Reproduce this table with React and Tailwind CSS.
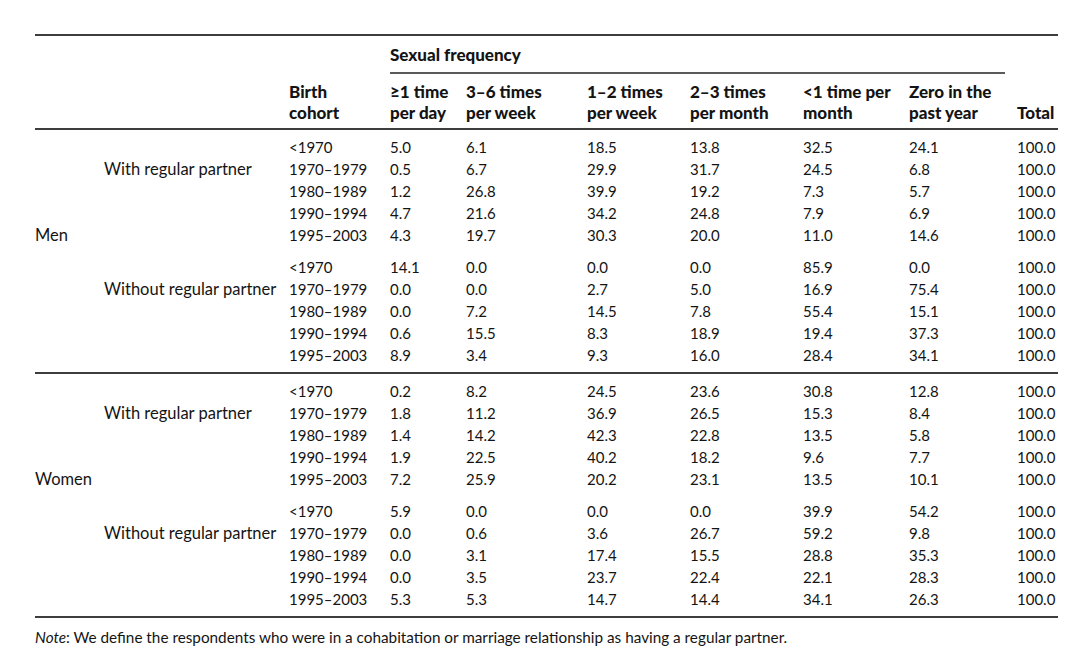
import React from "react";

// Birth cohort x sexual frequency table, by sex and partner status
const COHORTS = ["<1970", "1970–1979", "1980–1989", "1990–1994", "1995–2003"];

const GROUPS = [
  {
    sex: "Men",
    blocks: [
      {
        label: "With regular partner",
        rows: [
          ["5.0", "6.1", "18.5", "13.8", "32.5", "24.1"],
          ["0.5", "6.7", "29.9", "31.7", "24.5", "6.8"],
          ["1.2", "26.8", "39.9", "19.2", "7.3", "5.7"],
          ["4.7", "21.6", "34.2", "24.8", "7.9", "6.9"],
          ["4.3", "19.7", "30.3", "20.0", "11.0", "14.6"],
        ],
      },
      {
        label: "Without regular partner",
        rows: [
          ["14.1", "0.0", "0.0", "0.0", "85.9", "0.0"],
          ["0.0", "0.0", "2.7", "5.0", "16.9", "75.4"],
          ["0.0", "7.2", "14.5", "7.8", "55.4", "15.1"],
          ["0.6", "15.5", "8.3", "18.9", "19.4", "37.3"],
          ["8.9", "3.4", "9.3", "16.0", "28.4", "34.1"],
        ],
      },
    ],
  },
  {
    sex: "Women",
    blocks: [
      {
        label: "With regular partner",
        rows: [
          ["0.2", "8.2", "24.5", "23.6", "30.8", "12.8"],
          ["1.8", "11.2", "36.9", "26.5", "15.3", "8.4"],
          ["1.4", "14.2", "42.3", "22.8", "13.5", "5.8"],
          ["1.9", "22.5", "40.2", "18.2", "9.6", "7.7"],
          ["7.2", "25.9", "20.2", "23.1", "13.5", "10.1"],
        ],
      },
      {
        label: "Without regular partner",
        rows: [
          ["5.9", "0.0", "0.0", "0.0", "39.9", "54.2"],
          ["0.0", "0.6", "3.6", "26.7", "59.2", "9.8"],
          ["0.0", "3.1", "17.4", "15.5", "28.8", "35.3"],
          ["0.0", "3.5", "23.7", "22.4", "22.1", "28.3"],
          ["5.3", "5.3", "14.7", "14.4", "34.1", "26.3"],
        ],
      },
    ],
  },
];

const COLS = "grid grid-cols-[69px_185px_101px_76px_121px_103px_113px_106px_108px_41px]";

const Block = ({ sex, block, blockIndex }) => (
  <div className={blockIndex === 1 ? "mt-[10px]" : ""}>
    {block.rows.map((vals, i) => (
      <div key={i} className={`${COLS} h-[22px] items-center`}>
        <div className="text-[16.5px]">{blockIndex === 0 && i === 4 ? sex : ""}</div>
        <div className="text-[16.5px] whitespace-nowrap">{i === 1 ? block.label : ""}</div>
        <div>{COHORTS[i]}</div>
        {vals.map((v, j) => (
          <div key={j}>{v}</div>
        ))}
        <div>100.0</div>
      </div>
    ))}
  </div>
);

export default function App() {
  return (
    <div className="w-[1080px] h-[660px] bg-white text-[#141414] font-['Lato','Noto_Sans',sans-serif] text-[15px] leading-[21px]">
      <div className="w-[1023px] ml-[35px] pt-[34px]">
        {/* header */}
        <div className="border-t-2 border-[#3d3d3d]">
          <div className={`${COLS} h-[36px] items-center font-black text-[17px]`}>
            <div className="col-start-4 col-span-6 whitespace-nowrap">Sexual frequency</div>
          </div>
          <div className={COLS}>
            <div className="col-start-4 col-span-6 mr-[12px] border-t-2 border-[#5a5a5a]" />
          </div>
          <div className={`${COLS} pt-[7px] pb-[5px] items-end font-black text-[17px] whitespace-nowrap`}>
            <div />
            <div />
            <div>Birth<br />cohort</div>
            <div>≥1 time<br />per day</div>
            <div>3–6 times<br />per week</div>
            <div>1–2 times<br />per week</div>
            <div>2–3 times<br />per month</div>
            <div>&lt;1 time per<br />month</div>
            <div>Zero in the<br />past year</div>
            <div>Total</div>
          </div>
        </div>

        {/* body */}
        {GROUPS.map((g) => (
          <div key={g.sex} className="border-t-2 border-[#3d3d3d] pt-[6px] pb-[6px]">
            {g.blocks.map((b, bi) => (
              <Block key={bi} sex={g.sex} block={b} blockIndex={bi} />
            ))}
          </div>
        ))}

        <div className="border-t-2 border-[#3d3d3d] pt-[9px] text-[15.3px] leading-[20px] whitespace-nowrap">
          <span className="italic">Note</span>: We define the respondents who were in a cohabitation or marriage relationship as having a regular partner.
        </div>
      </div>
    </div>
  );
}
